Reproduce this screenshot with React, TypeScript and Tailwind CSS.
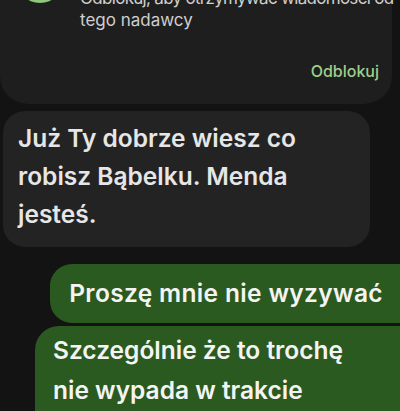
import React from 'react';

const received = ['Już Ty dobrze wiesz co', 'robisz Bąbelku. Menda', 'jesteś.'];
const sentLong = ['Szczególnie że to trochę', 'nie wypada w trakcie', 'rozmowy'];

const App: React.FC = () => {
  return (
    <div
      className="h-[411px] w-[400px] overflow-hidden bg-[#131313]"
      style={{ fontFamily: 'Inter, "Noto Sans", sans-serif' }}
    >
      {/* Karta zablokowanego nadawcy */}
      <div className="-mt-[13px] mr-2 rounded-b-[28px] bg-[#1e1e1e] pb-[23px] pr-[13px]">
        <div className="flex items-start">
          <div className="ml-[16px] mt-[-32px] h-12 w-12 shrink-0 rounded-full bg-[#8cc77c]" />
          <div className="ml-[16px] min-w-0 whitespace-nowrap text-[17px] leading-[22px] text-[#cfcfcf]">
            <p className="tracking-[-0.7px]">Odblokuj, aby otrzymywać wiadomości od</p>
            <p>tego nadawcy</p>
          </div>
        </div>
        <div className="mt-[30px] text-right text-[16px] font-medium leading-[20px] text-[#9dd08b]">
          Odblokuj
        </div>
      </div>

      {/* Wiadomość przychodząca */}
      <div className="ml-[3px] mt-[7px] w-[367px] rounded-[22px] bg-[#232323] px-[15px] pb-[14px] pt-[8px]">
        <p className="text-[24.5px] font-semibold leading-[38px] text-[#e6e6e6]">
          {received.map((line, i) => (
            <React.Fragment key={i}>
              {line}
              {i < received.length - 1 && <br />}
            </React.Fragment>
          ))}
        </p>
      </div>

      {/* Wiadomości wysłane */}
      <div className="mt-[17px] flex flex-col items-end gap-[3px]">
        <div className="-mr-6 rounded-[22px] bg-[#2b5a20] pb-[13px] pl-[19px] pr-[41px] pt-[12px]">
          <p className="whitespace-nowrap text-[24.5px] font-semibold leading-[34px] tracking-[0.35px] text-[#f4f4f4]">
            Proszę mnie nie wyzywać
          </p>
        </div>
        <div className="-mr-6 w-[389px] rounded-[24px] bg-[#2b5a20] pl-[18px] pt-[4px]">
          <p className="text-[24.5px] font-semibold leading-[40px] text-[#f4f4f4]">
            {sentLong.map((line, i) => (
              <React.Fragment key={i}>
                {line}
                {i < sentLong.length - 1 && <br />}
              </React.Fragment>
            ))}
          </p>
        </div>
      </div>
    </div>
  );
};

export default App;
